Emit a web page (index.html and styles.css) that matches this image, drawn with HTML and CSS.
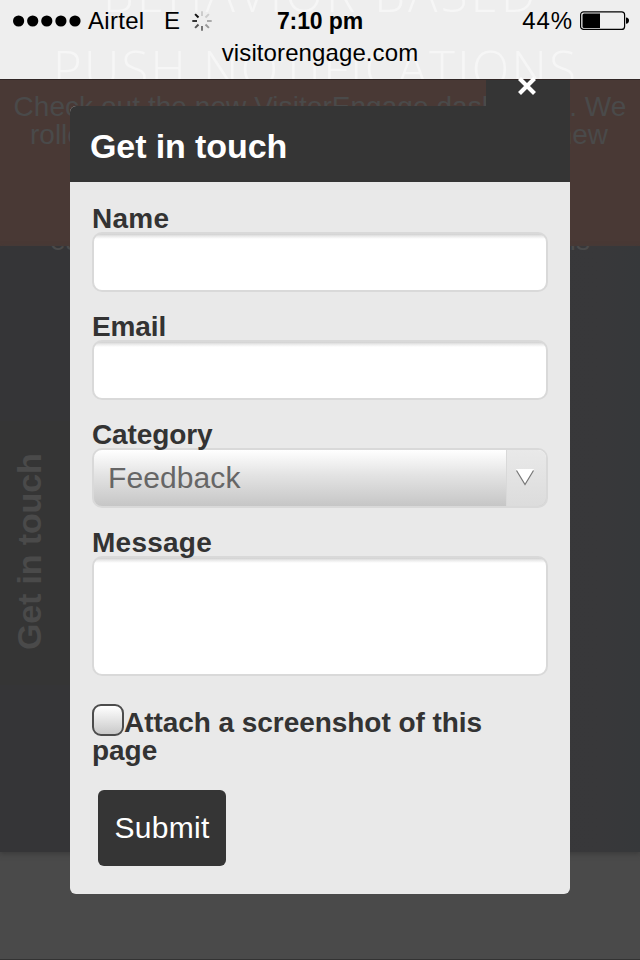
FILE: index.html
```html
<!DOCTYPE html>
<html lang="en">
<head>
<meta charset="utf-8">
<title>Get in touch</title>
<link rel="stylesheet" href="styles.css">
</head>
<body>
<div class="screen">
  <header class="browser-bar">
    <div class="hero-text"><span class="hero-one">BEHAVIOR BASED</span><span class="hero-two">PUSH NOTIFICATIONS</span></div>
    <div class="status">
      <div class="carrier">
        <svg class="signal" width="68" height="12" viewBox="0 0 68 12"><circle cx="5.6" cy="6" r="5.6"/><circle cx="19.7" cy="6" r="5.6"/><circle cx="33.8" cy="6" r="5.6"/><circle cx="47.9" cy="6" r="5.6"/><circle cx="62" cy="6" r="5.6"/></svg>
        <span class="operator">Airtel</span>
        <span class="network">E</span>
        <svg class="spinner" width="20" height="20" viewBox="-10 -10 20 20" stroke-width="2"><path d="M0-5V-9.7" stroke="#ccc"/><path d="M3.5-3.5 6.9-6.9" stroke="#ccc"/><path d="M5 0H9.7" stroke="#aaa"/><path d="M3.5 3.5 6.9 6.9" stroke="#999"/><path d="M0 5V9.7" stroke="#777"/><path d="M-3.5 3.5-6.9 6.9" stroke="#555"/><path d="M-5 0H-9.7" stroke="#333"/><path d="M-3.5-3.5-6.9-6.9" stroke="#111"/></svg>
      </div>
      <div class="clock">7:10 pm</div>
      <div class="power"><span>44%</span>
        <svg width="50" height="20" viewBox="0 0 50 20"><rect x=".6" y=".8" width="44" height="17.6" rx="3" fill="none" stroke="#000" stroke-width="1.2"/><path d="M4 2.5H20V17H4Q2.5 17 2.5 15.5V4Q2.5 2.5 4 2.5Z"/><path d="M46 6.4Q49 6.6 49 9.6T46 12.8Z"/></svg>
      </div>
    </div>
    <div class="address">visitorengage.com</div>
  </header>

  <div class="page">
    <section class="banner">
      <p class="banner-first">Check out the new VisitorEngage dashboard. We</p>
      <p class="banner-second"><span>rolled</span><span>new</span></p>
    </section>
    <section class="content"><p class="excerpt"><span>ea</span><span>is</span></p></section>
    <footer class="page-footer"></footer>
    <aside class="side-tab"><span>Get in touch</span></aside>
  </div>

  <main class="modal">
    <div class="close"><svg width="20" height="20" viewBox="0 0 20 20"><path d="M2.5 2.5 17.5 17.5M17.5 2.5 2.5 17.5" stroke="#fff" stroke-width="4.2"/></svg></div>
    <h1 class="modal-title">Get in touch</h1>
    <form class="form">
      <div class="field"><label for="name">Name</label><input class="box" id="name" type="text"></div>
      <div class="field"><label class="tight" for="email">Email</label><input class="box" id="email" type="text"></div>
      <div class="field"><label class="tight">Category</label>
        <div class="select"><span class="value">Feedback</span><span class="arrow"><svg width="18" height="17" viewBox="0 0 18 17"><path d="M0 0H18L9 17Z" fill="#fff"/><path d="M.5 1.5 9 15.5 17.5 1.5" fill="none" stroke="#777" stroke-width="1.2"/></svg></span></div>
      </div>
      <div class="field"><label for="message">Message</label><textarea class="box message" id="message"></textarea></div>
      <div class="attach"><span class="check"></span><span>Attach a screenshot of this<br>page</span></div>
      <button class="submit" type="button">Submit</button>
    </form>
  </main>
</div>
</body>
</html>
```
FILE: styles.css
```css
* { box-sizing: border-box; }
body { margin: 0; font-family: "Liberation Sans", Arial, sans-serif; }
p, h1 { margin: 0; }
.screen { position: relative; width: 640px; height: 960px; overflow: hidden; background: #4a4a4a; display: flex; flex-direction: column; }

.browser-bar { position: relative; z-index: 1; height: 80px; flex: none; background: #eee; border-bottom: 1px solid #302625; overflow: hidden; color: #000; font-size: 24px; }
.hero-text { position: absolute; inset: 0; color: #f6f6f6; font: 300 49px/74px "Open Sans", sans-serif; white-space: nowrap; }
.hero-text span { position: absolute; }
.hero-one { left: 103px; top: -44px; letter-spacing: 3.2px; }
.hero-two { left: 53px; top: 31px; letter-spacing: 2.3px; }
.status { position: relative; display: grid; grid-template-columns: 240px 160px 240px; height: 40px; line-height: 42px; }
.carrier { display: flex; align-items: center; padding-left: 13px; }
.operator { margin-left: 7px; width: 76px; letter-spacing: .3px; }
.network { width: 27px; }
.spinner { margin-left: 1px; }
.clock { text-align: center; font-weight: bold; font-size: 23px; letter-spacing: -.1px; }
.power { display: flex; align-items: center; justify-content: flex-end; padding-right: 10px; gap: 7px; letter-spacing: .9px; }
.address { position: relative; text-align: center; line-height: 26px; letter-spacing: .1px; }

.page { position: relative; flex: 1; display: flex; flex-direction: column; border-bottom: 1px solid #333; }
.banner { height: 166px; padding-top: 13px; background: #493935; color: #4a4a4a; font-size: 28px; line-height: 28px; text-align: center; white-space: nowrap; }
.banner-first { letter-spacing: .05px; }
.banner-second { display: flex; justify-content: space-between; padding: 0 32px 0 30px; }
.content { height: 606px; background: linear-gradient(90deg, #353537 0 70px, #38383a 600px, #36383a 640px); box-shadow: 0 2px 5px #3b3b3b; overflow: hidden; color: #4a4a4a; font-size: 28px; line-height: 28px; }
.excerpt { display: flex; justify-content: space-between; padding: 0 50px; margin-top: -19px; }
.page-footer { flex: 1; }
.side-tab { position: absolute; left: 0; top: 341px; width: 70px; height: 264px; background: #353535; color: #4a4a4a; font-size: 34px; font-weight: bold; display: flex; justify-content: center; padding-right: 13px; }
.side-tab span { writing-mode: vertical-rl; transform: rotate(180deg); text-align: center; line-height: 40px; letter-spacing: -.15px; padding-top: 2px; }

.modal { position: absolute; z-index: 2; left: 70px; top: 106px; width: 500px; height: 788px; background: #e9e9e9; border-radius: 6px; color: #333; }
.close { position: absolute; right: 0; top: -26px; width: 84px; height: 34px; background: #353535; padding-left: 31px; }
.close svg { display: block; margin-top: -4px; }
.modal-title { height: 76px; padding-left: 20px; line-height: 80px; font-size: 34px; letter-spacing: -.1px; color: #fff; background: #353535; border-radius: 6px 0 0 0; }
.form { display: flex; flex-direction: column; padding: 22px 22px 0; gap: 20px; font-size: 28px; font-weight: bold; line-height: 28px; }
.field { display: flex; flex-direction: column; }
.field label { height: 28px; letter-spacing: .25px; position: relative; top: 1px; z-index: 1; }
.field label.tight { letter-spacing: -.1px; }
.box { display: block; width: 456px; height: 60px; border: 2px solid #d9d9d9; border-radius: 10px; background: linear-gradient(#cfcfcf, #e8e8e8 2px, #fff 5px); resize: none; outline: none; }
.message { height: 120px; }
.select { display: flex; height: 60px; border: 2px solid #d9d9d9; border-radius: 10px; overflow: hidden; background: linear-gradient(#fff, #e3e3e3 45%, #c6c6c6); font-weight: normal; font-size: 30px; color: #666; }
.value { flex: 1; padding-left: 14px; line-height: 55px; letter-spacing: .1px; }
.arrow { width: 40px; border-left: 1px solid #d9d9d9; background: linear-gradient(#e9e9e9, #dcdcdc); display: flex; align-items: center; justify-content: center; padding: 0 3px 2px 0; }
.attach { display: flex; height: 56px; margin-top: 9px; }
.attach > span:last-child { padding-top: 4px; text-indent: 32px; margin-left: -32px; letter-spacing: -.05px; }
.check { position: relative; flex: none; width: 32px; height: 32px; margin-top: -1px; border: 2px solid #4c4c4c; border-radius: 9px; background: linear-gradient(#fff, #c9c9c9); }
.submit { width: 128px; height: 76px; margin: 9px 0 0 6px; padding: 0; border: 0; border-radius: 6px; background: #353535; color: #fff; font: 30px "Liberation Sans", Arial, sans-serif; letter-spacing: .3px; }
```
